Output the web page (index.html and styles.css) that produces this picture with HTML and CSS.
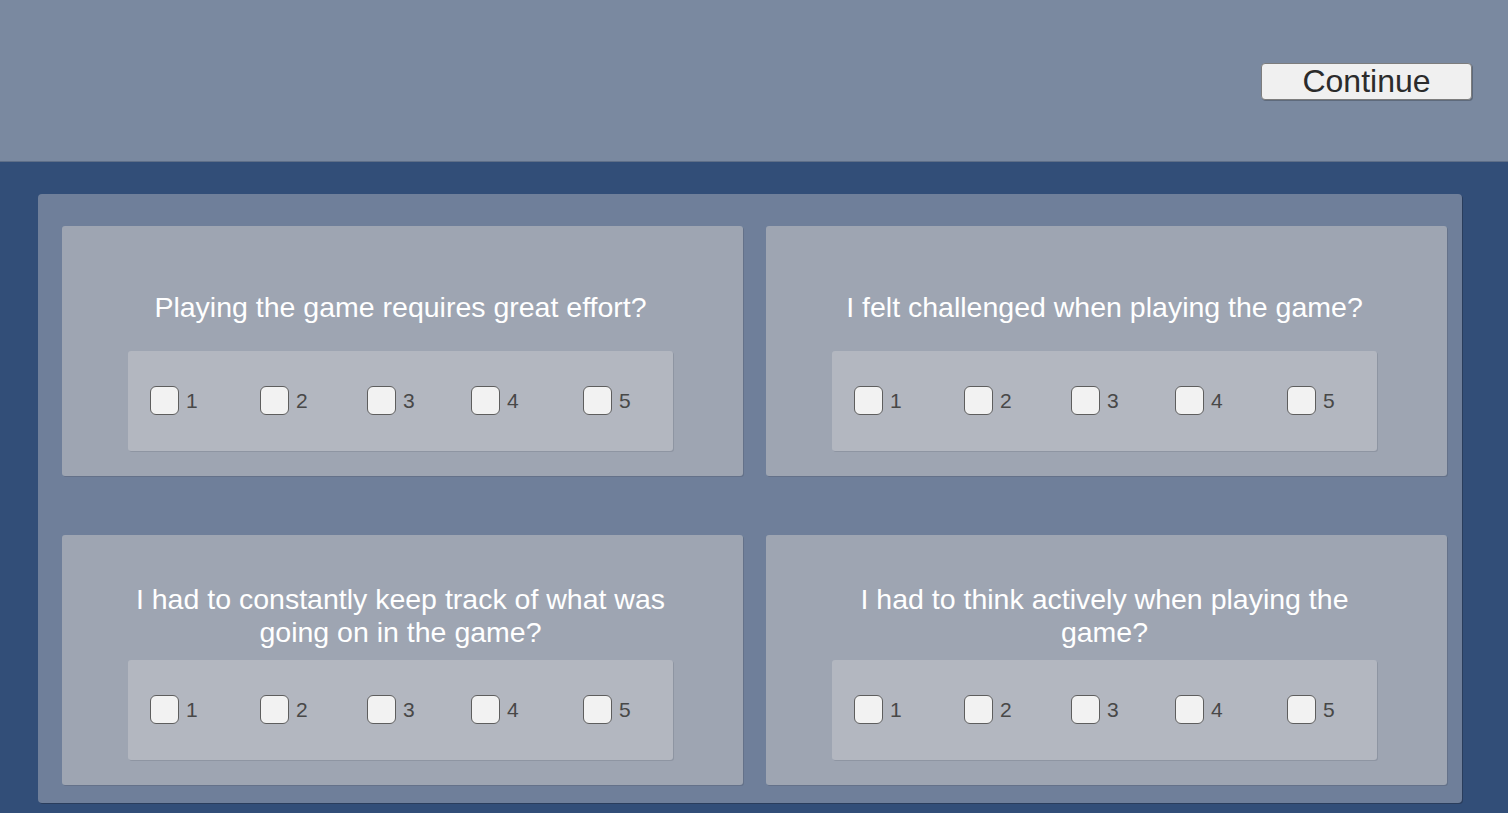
FILE: index.html
```html
<!DOCTYPE html>
<html>
<head>
<meta charset="utf-8">
<link rel="stylesheet" href="styles.css">
</head>
<body>
<div class="topbar">
  <button class="continue">Continue</button>
</div>
<div class="main">
  <div class="panel">
    <div class="card">
      <div class="question">Playing the game requires great effort?</div>
      <div class="scale">
        <label class="opt o1"><span class="box"></span><span class="num">1</span></label>
        <label class="opt o2"><span class="box"></span><span class="num">2</span></label>
        <label class="opt o3"><span class="box"></span><span class="num">3</span></label>
        <label class="opt o4"><span class="box"></span><span class="num">4</span></label>
        <label class="opt o5"><span class="box"></span><span class="num">5</span></label>
      </div>
    </div>
    <div class="card">
      <div class="question">I felt challenged when playing the game?</div>
      <div class="scale">
        <label class="opt o1"><span class="box"></span><span class="num">1</span></label>
        <label class="opt o2"><span class="box"></span><span class="num">2</span></label>
        <label class="opt o3"><span class="box"></span><span class="num">3</span></label>
        <label class="opt o4"><span class="box"></span><span class="num">4</span></label>
        <label class="opt o5"><span class="box"></span><span class="num">5</span></label>
      </div>
    </div>
    <div class="card">
      <div class="question">I had to constantly keep track of what was going on in the game?</div>
      <div class="scale">
        <label class="opt o1"><span class="box"></span><span class="num">1</span></label>
        <label class="opt o2"><span class="box"></span><span class="num">2</span></label>
        <label class="opt o3"><span class="box"></span><span class="num">3</span></label>
        <label class="opt o4"><span class="box"></span><span class="num">4</span></label>
        <label class="opt o5"><span class="box"></span><span class="num">5</span></label>
      </div>
    </div>
    <div class="card">
      <div class="question">I had to think actively when playing the game?</div>
      <div class="scale">
        <label class="opt o1"><span class="box"></span><span class="num">1</span></label>
        <label class="opt o2"><span class="box"></span><span class="num">2</span></label>
        <label class="opt o3"><span class="box"></span><span class="num">3</span></label>
        <label class="opt o4"><span class="box"></span><span class="num">4</span></label>
        <label class="opt o5"><span class="box"></span><span class="num">5</span></label>
      </div>
    </div>
  </div>
</div>
</body>
</html>
```

FILE: styles.css
```css
* { box-sizing: border-box; }
html, body {
  margin: 0;
  padding: 0;
  width: 1508px;
  height: 813px;
  overflow: hidden;
  font-family: "Liberation Sans", Arial, sans-serif;
  background: #324e78;
}
.topbar {
  height: 162px;
  background: #7a89a0;
  border-bottom: 1px solid #5f6f88;
  display: flex;
  justify-content: flex-end;
  align-items: flex-start;
  padding: 63px 36px 0 0;
}
.continue {
  width: 211px;
  height: 37px;
  background: #f0f0f0;
  border: 1px solid #7d7d7d;
  border-radius: 4px;
  font-family: "Liberation Sans", Arial, sans-serif;
  font-size: 32px;
  color: #2b2b2b;
  padding: 0;
  line-height: 35px;
  box-shadow: 1px 1px 0 #5e6a7c;
}
.main {
  padding: 32px 46px 0 38px;
}
.panel {
  width: 1424px;
  height: 609px;
  background: #6f7f9a;
  border-radius: 4px;
  box-shadow: 1px 1px 0 #2a3d5c;
  padding: 32px 15px 0 24px;
  display: grid;
  grid-template-columns: 681px 681px;
  grid-template-rows: 250px 250px;
  column-gap: 23px;
  row-gap: 59px;
}
.card {
  background: #9ea5b2;
  border-radius: 3px;
  box-shadow: 1px 1px 0 #647189;
  padding: 41px 0 0 66px;
  display: flex;
  flex-direction: column;
}
.question {
  width: 545px;
  height: 80px;
  display: flex;
  align-items: center;
  justify-content: center;
  text-align: center;
  color: #ffffff;
  font-size: 28.5px;
  line-height: 33px;
  margin-bottom: 4px;
}
.scale {
  width: 545px;
  height: 100px;
  background: #b3b7c0;
  border-radius: 3px;
  box-shadow: 1px 1px 0 #8e95a2;
  display: flex;
  align-items: center;
  padding: 0 0 1px 22px;
}
.opt {
  display: flex;
  align-items: center;
  gap: 7px;
}
.o1 { width: 110px; }
.o2 { width: 107px; }
.o3 { width: 104px; }
.o4 { width: 112px; }
.box {
  width: 29px;
  height: 29px;
  background: #f2f2f2;
  border: 1px solid #5e5e5e;
  border-radius: 6px;
}
.num {
  color: #484848;
  font-size: 21px;
}
```
